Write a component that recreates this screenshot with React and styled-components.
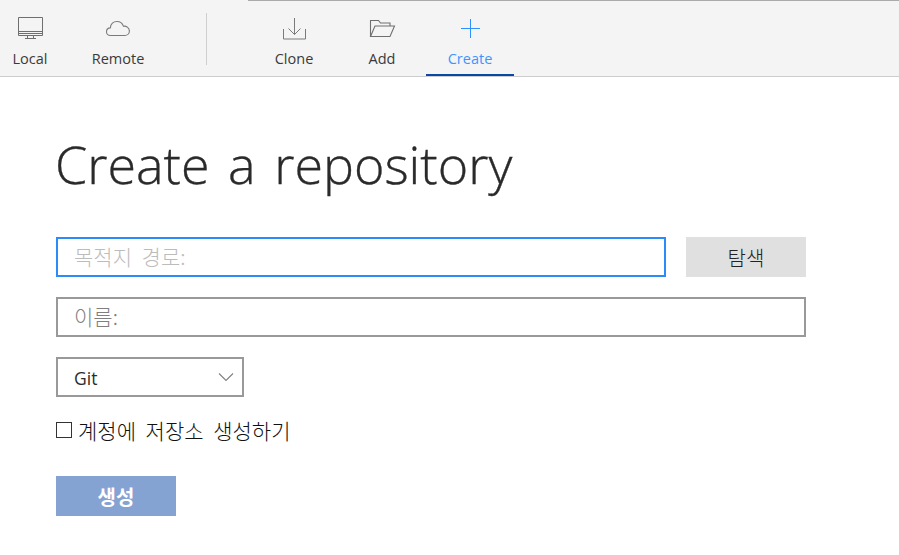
import React from "react";
import styled, { createGlobalStyle } from "styled-components";

const GlobalStyle = createGlobalStyle`
  html, body {
    margin: 0;
    padding: 0;
    background: #fff;
  }
  body {
    font-family: "Open Sans", "Noto Sans CJK KR", sans-serif;
    color: #2b2b2b;
    overflow: hidden;
  }
`;

const kr = `"Noto Sans CJK KR", "Open Sans", sans-serif`;

function MonitorIcon() {
  return (
    <svg width="28" height="24" viewBox="0 0 28 24" fill="none" stroke="#6f6f6f">
      <path d="M2.500 1.500h24v18h-24z" />
      <path d="M2 15.500h25M2 17.500h25" />
      <path d="M11.500 20v2.500M17.500 20v2.500M9 22.500h11" />
    </svg>
  );
}

function CloudIcon() {
  return (
    <svg width="28" height="24" viewBox="0 0 28 24" fill="none" stroke="#7a7a7a" strokeWidth="1.100">
      <path d="M6.500 19.500c-2.600 0-4-1.800-4-3.800 0-2.200 1.600-3.700 3.800-3.800C6.800 7.900 9.600 5.500 13 5.500c3.200 0 5.500 2 6.400 4.700 3.300-.4 6 1.800 6 4.700 0 2.700-2 4.600-4.600 4.600z" />
    </svg>
  );
}

function CloneIcon() {
  return (
    <svg width="28" height="24" viewBox="0 0 28 24" fill="none" stroke="#7a7a7a">
      <path d="M14.500 2v16.500M8.500 12.500l6 6 6-6" />
      <path d="M3.500 13v10h22V13" />
    </svg>
  );
}

function FolderIcon() {
  return (
    <svg width="28" height="24" viewBox="0 0 28 24" fill="none" stroke="#6f6f6f" strokeWidth="1.100">
      <path d="M2.500 20V4.500h8l2 2.500h9.500v3" />
      <path d="M2.500 20.500h19.500l4.500-10.500H7z" />
    </svg>
  );
}

function PlusIcon() {
  return (
    <svg width="28" height="24" viewBox="0 0 28 24" fill="none" stroke="#2f8fff" strokeWidth="1">
      <path d="M14.500 3v19M5 12.500h19" />
    </svg>
  );
}

function Chevron() {
  return (
    <svg width="16" height="10" viewBox="0 0 16 10" fill="none" stroke="#808080" strokeWidth="1.100">
      <path d="M1 1.500l7 7 7-7" />
    </svg>
  );
}

const tabs = {
  left: [
    { label: "Local", icon: <MonitorIcon /> },
    { label: "Remote", icon: <CloudIcon /> },
  ],
  right: [
    { label: "Clone", icon: <CloneIcon /> },
    { label: "Add", icon: <FolderIcon /> },
    { label: "Create", icon: <PlusIcon />, active: true },
  ],
};

export default function App() {
  return (
    <Page>
      <GlobalStyle />
      <Toolbar>
        <TabGroup $pull>
          {tabs.left.map((t) => (
            <Tab key={t.label}>
              <TabIcon>{t.icon}</TabIcon>
              {t.label}
            </Tab>
          ))}
        </TabGroup>
        <Divider />
        <TabGroup>
          {tabs.right.map((t) => (
            <Tab key={t.label} $active={t.active}>
              <TabIcon>{t.icon}</TabIcon>
              {t.label}
            </Tab>
          ))}
        </TabGroup>
      </Toolbar>
      <Content>
        <Title>Create a repository</Title>
        <Row>
          <TextInput $focused $width="610px" placeholder="목적지 경로:" />
          <BrowseButton>탐색</BrowseButton>
        </Row>
        <Row>
          <TextInput $width="750px" placeholder="이름:" />
        </Row>
        <SelectBox>
          <Select defaultValue="Git">
            <option>Git</option>
            <option>Mercurial</option>
          </Select>
          <ChevronSlot>
            <Chevron />
          </ChevronSlot>
        </SelectBox>
        <CheckRow>
          <CheckBox type="checkbox" />
          계정에 저장소 생성하기
        </CheckRow>
        <CreateButton>생성</CreateButton>
      </Content>
    </Page>
  );
}

const Page = styled.div`
  width: 899px;
  height: 555px;
  display: flex;
  flex-direction: column;
`;

const Toolbar = styled.div`
  height: 76px;
  display: flex;
  align-items: stretch;
  background: #f4f4f4;
  border-bottom: 1px solid #cccccc;
  overflow: hidden;
  position: relative;

  &::before {
    content: "";
    position: absolute;
    top: 0;
    left: 248px;
    right: 0;
    height: 1px;
    background: #aaaaaa;
  }
`;

const TabGroup = styled.div`
  display: flex;
  margin-left: ${(p) => (p.$pull ? "-14px" : "0")};
`;

const Tab = styled.div`
  width: 88px;
  box-sizing: border-box;
  display: flex;
  flex-direction: column;
  align-items: center;
  padding-top: 16px;
  font-size: 14.5px;
  line-height: 19px;
  color: ${(p) => (p.$active ? "#3f94ff" : "#3a3a3a")};
  border-bottom: 2px solid ${(p) => (p.$active ? "#0b48a6" : "transparent")};
`;

const TabIcon = styled.div`
  height: 24px;
  margin-bottom: 9px;
  display: flex;
  justify-content: center;
`;

const Divider = styled.div`
  width: 1px;
  height: 52px;
  margin: 13px 43px 0 44px;
  background: #cfcfcf;
`;

const Content = styled.div`
  padding: 0 0 0 56px;
  display: flex;
  flex-direction: column;
  align-items: flex-start;
`;

const Title = styled.h1`
  margin: 52px 0 38px -1px;
  font-size: 52px;
  line-height: 70px;
  font-weight: 300;
  color: #2a2a2a;
  word-spacing: 5px;
  -webkit-text-stroke: 0.35px #2a2a2a;
`;

const Row = styled.div`
  display: flex;
  gap: 20px;
  margin-bottom: 20px;
`;

const TextInput = styled.input`
  width: ${(p) => p.$width};
  height: 40px;
  box-sizing: border-box;
  padding: 0 0 2px 16px;
  border: 2px solid ${(p) => (p.$focused ? "#2b8cf7" : "#999999")};
  background: #fff;
  outline: none;
  font-family: ${kr};
  font-size: 21px;
  font-weight: 300;
  word-spacing: 5px;
  color: #2b2b2b;

  &::placeholder {
    color: ${(p) => (p.$focused ? "#bcbcbc" : "#7f7f7f")};
    opacity: 1;
  }
`;

const BrowseButton = styled.button`
  width: 120px;
  height: 40px;
  border: 0;
  padding: 0;
  background: #e0e0e0;
  font-family: ${kr};
  font-size: 20px;
  font-weight: 300;
  color: #222222;
`;

const SelectBox = styled.div`
  position: relative;
  width: 188px;
  height: 40px;
`;

const Select = styled.select`
  width: 100%;
  height: 100%;
  box-sizing: border-box;
  appearance: none;
  padding: 1px 16px 0;
  border: 2px solid #999999;
  border-radius: 0;
  background: #fff;
  outline: none;
  font-family: "Open Sans", sans-serif;
  font-size: 17.5px;
  color: #2b2b2b;
`;

const ChevronSlot = styled.span`
  position: absolute;
  right: 10px;
  top: 15px;
  display: flex;
  pointer-events: none;
`;

const CheckRow = styled.label`
  display: flex;
  align-items: center;
  gap: 6px;
  margin-top: 20px;
  height: 26px;
  font-family: ${kr};
  font-size: 21px;
  font-weight: 300;
  word-spacing: 5px;
  color: #111111;
`;

const CheckBox = styled.input`
  appearance: none;
  width: 16px;
  height: 16px;
  margin: 0;
  box-sizing: border-box;
  border: 1px solid #333333;
  background: #fff;
`;

const CreateButton = styled.button`
  width: 120px;
  height: 40px;
  margin-top: 33px;
  border: 0;
  padding: 0;
  background: #84a3d3;
  font-family: ${kr};
  font-size: 20px;
  font-weight: 700;
  color: #ffffff;
`;
